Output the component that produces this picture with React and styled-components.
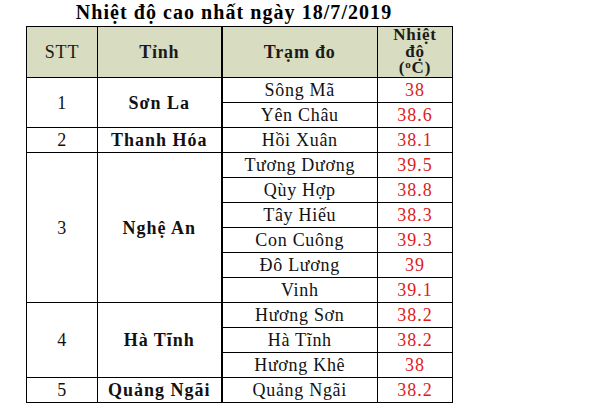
import React from "react";
import styled, { createGlobalStyle } from "styled-components";

const Global = createGlobalStyle`
  html, body { margin: 0; padding: 0; background: #fff; }
  body { font-family: "Liberation Serif", "Times New Roman", serif; color: #000; }
`;

const Page = styled.div`
  width: 600px;
  height: 416px;
  padding: 0 0 0 26px;
  box-sizing: border-box;
`;

const Title = styled.h1`
  margin: 0;
  width: 426px;
  height: 26px;
  padding-right: 10px;
  box-sizing: border-box;
  font-size: 20px;
  letter-spacing: 1.05px;
  font-weight: bold;
  text-align: center;
  line-height: 24px;
  white-space: nowrap;
`;

const Table = styled.table`
  border-collapse: collapse;
  width: 426px;
  table-layout: fixed;
`;

const Th = styled.th`
  background: #d8dcc0;
  border: 1px solid #000;
  border-left-width: ${(p) => (p.$thick ? "2px" : "1px")};
  height: 50px;
  padding: 0;
  font-size: ${(p) => (p.$small ? "17px" : "18px")};
  letter-spacing: ${(p) => (p.$small ? "0.8px" : "0.8px")};
  font-weight: ${(p) => (p.$normal ? "normal" : "bold")};
  line-height: ${(p) => (p.$small ? "16.5px" : "18px")};
  text-align: center;
  color: #1a1a1a;
  white-space: nowrap;
`;

const Td = styled.td`
  border: 1px solid #000;
  border-left-width: ${(p) => (p.$thick ? "2px" : "1px")};
  height: 24px;
  padding: 0;
  font-size: 18px;
  letter-spacing: ${(p) => (p.$bold ? "1px" : p.$num ? "1px" : "0.7px")};
  font-weight: ${(p) => (p.$bold ? "bold" : "normal")};
  color: ${(p) => (p.$num ? "#e02020" : "#111")};
  text-align: center;
  vertical-align: middle;
  line-height: 20px;
  white-space: nowrap;
`;

const Sup = styled.sup`
  font-size: 11px;
  vertical-align: 5px;
  line-height: 0;
`;

const groups = [
  { stt: "1", tinh: "Sơn La", rows: [["Sông Mã", "38"], ["Yên Châu", "38.6"]] },
  { stt: "2", tinh: "Thanh Hóa", rows: [["Hồi Xuân", "38.1"]] },
  {
    stt: "3",
    tinh: "Nghệ An",
    rows: [
      ["Tương Dương", "39.5"],
      ["Qùy Hợp", "38.8"],
      ["Tây Hiếu", "38.3"],
      ["Con Cuông", "39.3"],
      ["Đô Lương", "39"],
      ["Vinh", "39.1"],
    ],
  },
  {
    stt: "4",
    tinh: "Hà Tĩnh",
    rows: [["Hương Sơn", "38.2"], ["Hà Tĩnh", "38.2"], ["Hương Khê", "38"]],
  },
  { stt: "5", tinh: "Quảng Ngãi", rows: [["Quảng Ngãi", "38.2"]] },
];

export default function App() {
  return (
    <Page>
      <Global />
      <Title>Nhiệt độ cao nhất ngày 18/7/2019</Title>
      <Table>
        <colgroup>
          <col style={{ width: 71 }} />
          <col style={{ width: 124 }} />
          <col style={{ width: 156 }} />
          <col style={{ width: 75 }} />
        </colgroup>
        <thead>
          <tr>
            <Th $normal>STT</Th>
            <Th>Tỉnh</Th>
            <Th $thick>Trạm đo</Th>
            <Th $small>
              Nhiệt
              <br />
              độ
              <br />(<Sup>o</Sup>C)
            </Th>
          </tr>
        </thead>
        <tbody>
          {groups.map((g) =>
            g.rows.map((r, i) => (
              <tr key={g.stt + r[0]}>
                {i === 0 && <Td rowSpan={g.rows.length}>{g.stt}</Td>}
                {i === 0 && (
                  <Td $bold rowSpan={g.rows.length}>
                    {g.tinh}
                  </Td>
                )}
                <Td $thick>{r[0]}</Td>
                <Td $num>{r[1]}</Td>
              </tr>
            ))
          )}
        </tbody>
      </Table>
    </Page>
  );
}
